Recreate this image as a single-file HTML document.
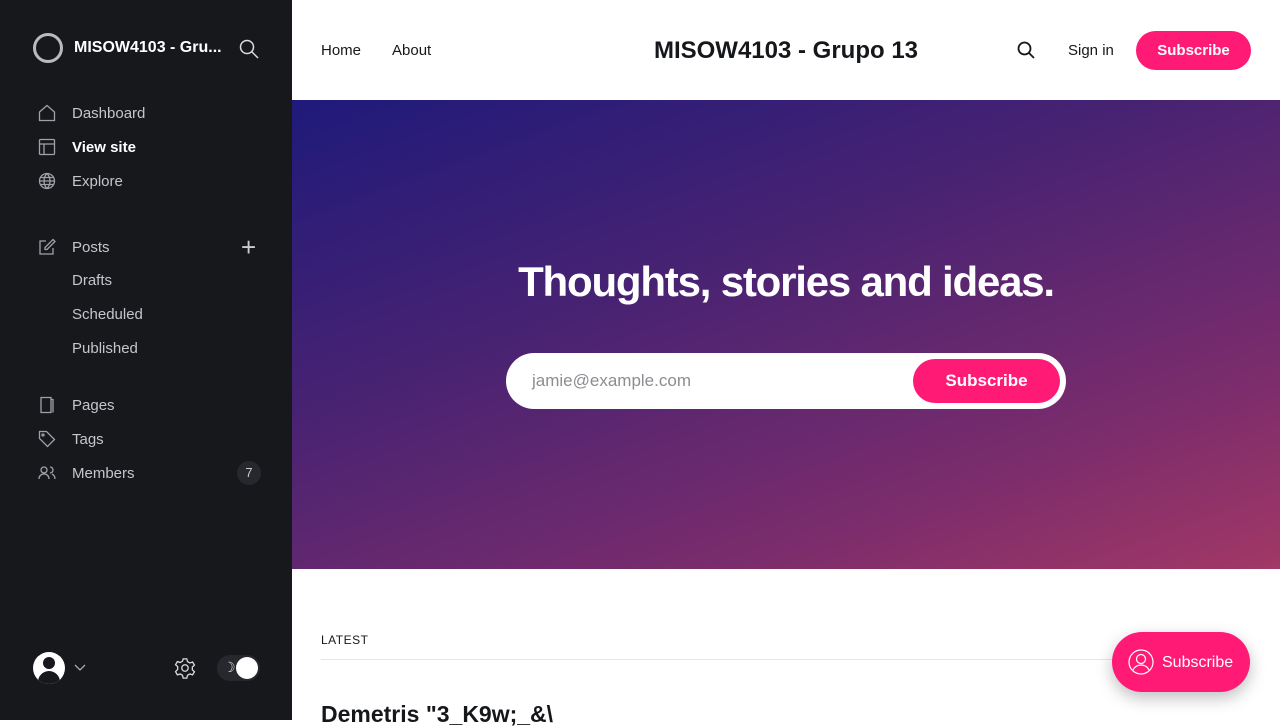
<!DOCTYPE html>
<html><head><meta charset="utf-8"><style>
*{box-sizing:border-box;margin:0;padding:0}
body{width:1280px;height:720px;overflow:hidden;font-family:"Liberation Sans",sans-serif;background:#fff;position:relative}
.sb{position:absolute;left:0;top:0;width:292px;height:720px;background:#17181c;color:#c3c6cb}
.sb .it{position:absolute;left:38px;font-size:15px;display:flex;align-items:center}
.sb .it svg{width:18px;height:18px;margin-right:16px;stroke:#9ea2a8;fill:none;stroke-width:1.3}
.sb .sub{position:absolute;left:72px;font-size:15px}
.main{position:absolute;left:292px;top:0;width:988px}
.hero{position:absolute;left:292px;top:100px;width:988px;height:469px;background:linear-gradient(160deg,#1f1a7a 0%,#4a2372 40%,#7a2c6c 75%,#a23866 100%)}
</style></head><body>
<div class="sb">
 <div style="position:absolute;left:33px;top:33px;width:30px;height:30px;border:3px solid #bbb;border-radius:50%"></div>
 <div style="position:absolute;left:74px;top:39px;font-size:16px;font-weight:bold;color:#fff">MISOW4103 - Gru...</div>
 <svg style="position:absolute;left:239px;top:39px" width="20" height="20" fill="none" stroke="#ddd" stroke-width="1.5"><circle cx="8" cy="8" r="6.5"/><path d="M13 13l6 6"/></svg>
 <div class="it" style="top:104px"><svg viewBox="0 0 18 18"><path d="M1.5 8L9 1.5 16.5 8v8.5h-15z"/></svg>Dashboard</div>
 <div class="it" style="top:138px;color:#fff;font-weight:bold"><svg viewBox="0 0 18 18"><rect x="1.5" y="1.5" width="15" height="15" rx="1"/><path d="M1.5 6h15M6 6v10.5"/></svg>View site</div>
 <div class="it" style="top:172px"><svg viewBox="0 0 18 18"><circle cx="9" cy="9" r="7.5"/><path d="M1.5 9h15M9 1.5c-4 4-4 11 0 15M9 1.5c4 4 4 11 0 15M2.5 5.5h13M2.5 12.5h13"/></svg>Explore</div>
 <div class="it" style="top:238px"><svg viewBox="0 0 18 18"><path d="M8 3H2v13h13v-6M15 1.5l2 2-8 8H7v-2z"/></svg>Posts</div>
 <div style="position:absolute;left:241px;top:235px;font-size:26px;color:#ccc;line-height:24px;font-weight:300">+</div>
 <div class="sub" style="top:272px">Drafts</div>
 <div class="sub" style="top:306px">Scheduled</div>
 <div class="sub" style="top:340px">Published</div>
 <div class="it" style="top:396px"><svg viewBox="0 0 18 18"><path d="M3 1.5h10v15H3zM13 3.5h2v13"/></svg>Pages</div>
 <div class="it" style="top:430px"><svg viewBox="0 0 18 18"><path d="M1.5 1.5h7l8 8-7 7-8-8z"/><circle cx="5" cy="5" r="1"/></svg>Tags</div>
 <div class="it" style="top:464px"><svg viewBox="0 0 18 18"><circle cx="6" cy="6" r="3"/><path d="M1 15c0-3 2-5 5-5s5 2 5 5M12 3a3 3 0 010 6M14 10c2 1 3 3 3 5"/></svg>Members</div>
 <div style="position:absolute;left:237px;top:461px;width:24px;height:24px;border-radius:12px;background:#26282d;color:#ccc;font-size:13px;text-align:center;line-height:24px">7</div>
 <div style="position:absolute;left:33px;top:652px;width:32px;height:32px;border-radius:50%;background:#fff;overflow:hidden"><div style="position:absolute;left:10px;top:5px;width:12px;height:12px;border-radius:50%;background:#17181c"></div><div style="position:absolute;left:5px;top:19px;width:22px;height:16px;border-radius:11px 11px 0 0;background:#17181c"></div></div>
 <svg style="position:absolute;left:74px;top:664px" width="12" height="8" fill="none" stroke="#aaa" stroke-width="1.3"><path d="M1 1l5 5 5-5"/></svg>
 <svg style="position:absolute;left:174px;top:657px" width="22" height="22" viewBox="0 0 24 24" fill="none" stroke="#ddd" stroke-width="1.4"><circle cx="12" cy="12" r="3.5"/><path d="M10 2h4l.7 3 2.6 1.5 3-1 2 3.4-2.3 2.1v3l2.3 2.1-2 3.4-3-1-2.6 1.5-.7 3h-4l-.7-3-2.6-1.5-3 1-2-3.4L4 13.5v-3L1.7 8.4l2-3.4 3 1L9.3 4.5z"/></svg>
 <div style="position:absolute;left:217px;top:655px;width:43px;height:26px;border-radius:13px;background:#26282d"><span style="position:absolute;left:6px;top:4px;color:#ddd;font-size:14px">☽</span><div style="position:absolute;right:2px;top:2px;width:22px;height:22px;border-radius:50%;background:#fff"></div></div>
</div>
<div class="main">
 <div style="position:absolute;left:29px;top:42px;font-size:15px;color:#15171a">Home</div>
 <div style="position:absolute;left:100px;top:42px;font-size:15px;color:#15171a">About</div>
 <div style="position:absolute;left:0;width:988px;top:37px;text-align:center;font-size:24px;font-weight:bold;color:#15171a">MISOW4103 - Grupo 13</div>
 <svg style="position:absolute;left:725px;top:41px" width="18" height="18" fill="none" stroke="#15171a" stroke-width="1.8"><circle cx="7.5" cy="7.5" r="6"/><path d="M12 12l5 5"/></svg>
 <div style="position:absolute;left:776px;top:42px;font-size:15px;color:#15171a">Sign in</div>
 <div style="position:absolute;left:844px;top:31px;width:115px;height:39px;border-radius:20px;background:#ff1a75;color:#fff;font-weight:bold;font-size:15px;text-align:center;line-height:40px">Subscribe</div>
</div>
<div class="hero">
 <div style="position:absolute;left:0;width:988px;top:158px;text-align:center;color:#fff;font-size:42px;font-weight:bold;letter-spacing:-1.2px">Thoughts, stories and ideas.</div>
 <div style="position:absolute;left:214px;top:253px;width:560px;height:56px;border-radius:28px;background:#fff">
  <div style="position:absolute;left:26px;top:18px;font-size:17px;color:#8a8d91">jamie@example.com</div>
  <div style="position:absolute;right:6px;top:6px;width:147px;height:44px;border-radius:22px;background:#ff1a75;color:#fff;font-weight:bold;font-size:17px;text-align:center;line-height:44px">Subscribe</div>
 </div>
</div>
<div style="position:absolute;left:321px;top:633px;font-size:12px;letter-spacing:.5px;color:#15171a">LATEST</div>
<div style="position:absolute;left:321px;top:659px;width:930px;height:1px;background:#e6e6e6"></div>
<div style="position:absolute;left:321px;top:701px;font-size:23px;font-weight:bold;color:#15171a">Demetris "3_K9w;_&amp;\</div>
<div style="position:absolute;left:1112px;top:632px;width:138px;height:60px;border-radius:30px;background:#ff1a75;box-shadow:0 6px 16px rgba(0,0,0,.25);color:#fff;font-size:16px">
 <svg style="position:absolute;left:16px;top:17px" width="26" height="26" fill="none" stroke="#fff" stroke-width="1.2"><circle cx="13" cy="13" r="12"/><circle cx="13" cy="10" r="4.5"/><path d="M5 21c2-4 5-5 8-5s6 1 8 5"/></svg>
 <span style="position:absolute;left:50px;top:22px">Subscribe</span>
</div>
</body></html>
